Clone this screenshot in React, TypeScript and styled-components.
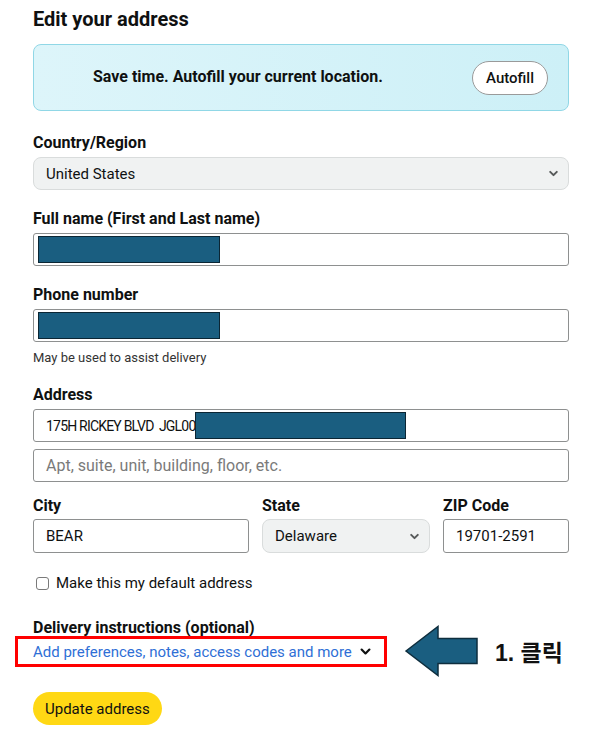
import React from "react"
import styled, { createGlobalStyle } from "styled-components"

const Global = createGlobalStyle`
  html, body {
    margin: 0;
    padding: 0;
    background: #fff;
  }
  body {
    font-family: Roboto, "Liberation Sans", "Noto Sans CJK KR", sans-serif;
    color: #0f1111;
  }
`

const Chevron: React.FC<{ size?: number; color?: string; stroke?: number }> = ({ size = 10, color = "#555", stroke = 1.6 }) => (
  <svg width={size} height={size} viewBox="0 0 10 10">
    <path d="M2 3.5 L5 6.5 L8 3.5" fill="none" stroke={color} strokeWidth={stroke} strokeLinecap="round" strokeLinejoin="round" />
  </svg>
)

const LeftArrow: React.FC = () => (
  <svg width="76" height="52" viewBox="0 0 76 52">
    <path d="M2 26 L34 1.5 L34 13.5 L73 13.5 L73 38.5 L34 38.5 L34 50.5 Z" fill="#1a5e80" stroke="#0e2e3e" strokeWidth="1.5" strokeLinejoin="miter" />
  </svg>
)

export default function App() {
  return (
    <>
      <Global />
      <S.Page>
        <S.Title>Edit your address</S.Title>

        <S.Autofill>
          <S.AutofillText>Save time. Autofill your current location.</S.AutofillText>
          <S.PillButton>Autofill</S.PillButton>
        </S.Autofill>

        <S.Field space={23}>
          <S.Label>Country/Region</S.Label>
          <S.Select>
            <span>United States</span>
            <Chevron size={11} color="#565959" stroke={1.8} />
          </S.Select>
        </S.Field>

        <S.Field space={20}>
          <S.Label>Full name (First and Last name)</S.Label>
          <S.Input>
            <S.Redact width={182} />
          </S.Input>
        </S.Field>

        <S.Field space={20}>
          <S.Label>Phone number</S.Label>
          <S.Input>
            <S.Redact width={182} />
          </S.Input>
          <S.Hint>May be used to assist delivery</S.Hint>
        </S.Field>

        <S.Field space={20}>
          <S.Label>Address</S.Label>
          <S.Input>
            <S.InputText condensed>175H RICKEY BLVD&nbsp;&nbsp;JGL00</S.InputText>
            <S.Redact width={211} />
          </S.Input>
          <S.Input>
            <S.Placeholder>Apt, suite, unit, building, floor, etc.</S.Placeholder>
          </S.Input>
        </S.Field>

        <S.Row>
          <S.Field space={15} tight>
            <S.Label>City</S.Label>
            <S.Input tall>
              <S.InputText>BEAR</S.InputText>
            </S.Input>
          </S.Field>
          <S.Field space={15} tight>
            <S.Label>State</S.Label>
            <S.Select tall>
              <span>Delaware</span>
              <Chevron size={11} color="#565959" stroke={1.8} />
            </S.Select>
          </S.Field>
          <S.Field space={15} tight>
            <S.Label>ZIP Code</S.Label>
            <S.Input tall>
              <S.InputText>19701-2591</S.InputText>
            </S.Input>
          </S.Field>
        </S.Row>

        <S.CheckRow>
          <S.Checkbox />
          <span>Make this my default address</span>
        </S.CheckRow>

        <S.Delivery>
          <S.Label>Delivery instructions (optional)</S.Label>
          <S.LinkLine>
            <S.Highlight>
              <S.Link>Add preferences, notes, access codes and more</S.Link>
              <Chevron size={13} color="#0f1111" stroke={1.7} />
            </S.Highlight>
            <S.Callout>
              <LeftArrow />
              <S.CalloutText>1. 클릭</S.CalloutText>
            </S.Callout>
          </S.LinkLine>
        </S.Delivery>

        <S.Primary>Update address</S.Primary>
      </S.Page>
    </>
  )
}

const S = {
  Page: styled.div`
    display: flex;
    flex-direction: column;
    width: 536px;
    padding: 7px 0 0 33px;
  `,
  Title: styled.h1`
    margin: 0;
    font-size: 20px;
    font-weight: 700;
    line-height: 24px;
  `,
  Autofill: styled.div`
    box-sizing: border-box;
    margin-top: 13px;
    height: 67px;
    display: flex;
    align-items: center;
    justify-content: space-between;
    padding: 0 20px 0 59px;
    background: linear-gradient(90deg, #ddf5fa, #cdf0f7);
    border: 1.5px solid #90d7e6;
    border-radius: 8px;
  `,
  AutofillText: styled.div`
    font-size: 16px;
    font-weight: 700;
    padding-bottom: 2px;
  `,
  PillButton: styled.div`
    box-sizing: border-box;
    height: 34px;
    width: 76px;
    display: flex;
    align-items: center;
    justify-content: center;
    font-size: 15px;
    font-weight: 500;
    background: #fff;
    border: 1.5px solid #9a9a9a;
    border-radius: 17px;
  `,
  Field: styled.div<{ space: number; tight?: boolean }>`
    display: flex;
    flex-direction: column;
    gap: ${({ tight }) => (tight ? 4 : 5)}px;
    margin-top: ${({ space }) => space}px;
  `,
  Label: styled.div`
    font-size: 16px;
    font-weight: 700;
    line-height: 18px;
  `,
  Select: styled.div<{ tall?: boolean }>`
    box-sizing: border-box;
    height: ${({ tall }) => (tall ? 34 : 33)}px;
    display: flex;
    align-items: center;
    justify-content: space-between;
    padding: 0 9px 0 12px;
    font-size: 15px;
    background: #f0f2f2;
    border: 1px solid #d9dcdc;
    border-radius: 8px;
  `,
  Input: styled.div<{ tall?: boolean }>`
    box-sizing: border-box;
    height: ${({ tall }) => (tall ? 34 : 33)}px;
    display: flex;
    align-items: center;
    padding: 0 4px;
    font-size: 15px;
    background: #fff;
    border: 1.5px solid #8e9090;
    border-radius: 3px;
    & + & {
      margin-top: 2px;
    }
  `,
  InputText: styled.span<{ condensed?: boolean }>`
    padding-left: 8px;
    white-space: pre;
    font-size: ${({ condensed }) => (condensed ? 14 : 15)}px;
    letter-spacing: ${({ condensed }) => (condensed ? "-0.8px" : "0")};
  `,
  Placeholder: styled.span`
    padding-left: 8px;
    font-size: 16px;
    color: #7a7a7a;
  `,
  Redact: styled.div<{ width: number }>`
    box-sizing: border-box;
    width: ${({ width }) => width}px;
    height: 27px;
    background: #1a5e80;
    border: 1.5px solid #0b2634;
  `,
  Hint: styled.div`
    font-size: 13px;
    line-height: 16px;
    color: #333;
    margin-top: 3px;
  `,
  Row: styled.div`
    display: grid;
    grid-template-columns: 216px 168px 126px;
    column-gap: 13px;
  `,
  CheckRow: styled.div`
    display: flex;
    align-items: center;
    gap: 7px;
    margin-top: 21px;
    padding-left: 3px;
    font-size: 15px;
    line-height: 18px;
  `,
  Checkbox: styled.div`
    box-sizing: border-box;
    width: 13px;
    height: 13px;
    border: 1.5px solid #7a7a7a;
    border-radius: 3px;
    background: #fff;
  `,
  Delivery: styled.div`
    display: flex;
    flex-direction: column;
    margin-top: 27px;
  `,
  LinkLine: styled.div`
    display: flex;
    align-items: center;
    margin-left: -18px;
    margin-top: -1px;
  `,
  Highlight: styled.div`
    box-sizing: border-box;
    width: 372px;
    height: 31px;
    display: flex;
    align-items: center;
    gap: 7px;
    padding-left: 15px;
    border: 3px solid #ff0000;
  `,
  Link: styled.span`
    font-size: 15px;
    color: #2f6fd6;
  `,
  Callout: styled.div`
    display: flex;
    align-items: center;
    gap: 15px;
    margin: -11px 0 -10px 17px;
  `,
  CalloutText: styled.span`
    font-family: "Liberation Sans", "Noto Sans CJK KR", sans-serif;
    font-size: 23px;
    font-weight: 700;
    color: #111;
  `,
  Primary: styled.div`
    align-self: flex-start;
    box-sizing: border-box;
    margin-top: 25px;
    height: 33px;
    padding: 0 12px;
    display: flex;
    align-items: center;
    font-size: 15px;
    background: #ffd814;
    border-radius: 17px;
  `,
}
